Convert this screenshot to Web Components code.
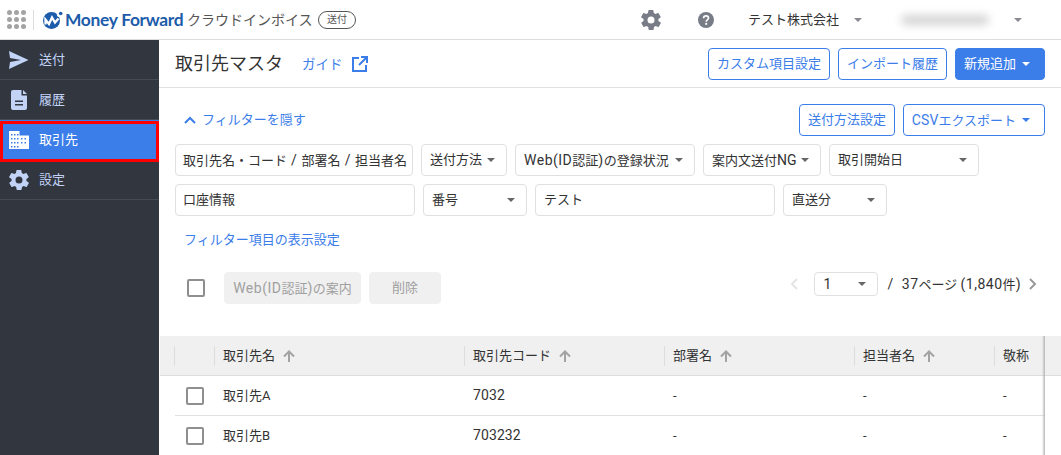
<!DOCTYPE html>
<html lang="ja"><head><meta charset="utf-8"><title>取引先マスタ</title>
<style>
html,body{margin:0;height:455px;overflow:hidden;background:#fff}
body{font:13px/20px Roboto,"Noto Sans CJK JP",sans-serif;color:#333;display:block}
</style></head><body>
<app-shell></app-shell>
<script>
const caret=(c='#666')=>`<svg width="8" height="4" viewBox="0 0 8 4" style="flex:none"><path d="M0 0h8L4 4z" fill="${c}"/></svg>`;
const L=(s,ls)=>`<mf-l${ls?` style="letter-spacing:${ls}px"`:''}>${s}</mf-l>`;
const GEAR='M19.4 13a7.5 7.5 0 0 0 0-2l2.1-1.6a.5.5 0 0 0 .1-.6l-2-3.5a.5.5 0 0 0-.6-.2l-2.5 1a7.3 7.3 0 0 0-1.7-1l-.4-2.7a.5.5 0 0 0-.5-.4h-4a.5.5 0 0 0-.5.4l-.4 2.7a7.3 7.3 0 0 0-1.7 1l-2.5-1a.5.5 0 0 0-.6.2l-2 3.5a.5.5 0 0 0 .1.6L4.6 11a7.5 7.5 0 0 0 0 2l-2.1 1.6a.5.5 0 0 0-.1.6l2 3.5c.1.2.4.3.6.2l2.5-1a7.3 7.3 0 0 0 1.7 1l.4 2.7c0 .2.2.4.5.4h4c.3 0 .5-.2.5-.4l.4-2.7a7.3 7.3 0 0 0 1.7-1l2.5 1c.2.1.5 0 .6-.2l2-3.5a.5.5 0 0 0-.1-.6zM12 15.5a3.5 3.5 0 1 1 0-7 3.5 3.5 0 0 1 0 7z';
function def(name,css,html){
  customElements.define(name,class extends HTMLElement{
    constructor(){super();const r=this.attachShadow({mode:'open'});
      r.innerHTML=`<style>${css}</style>${html}`;}
  });
}
def('mf-l',`:host{display:inline;font-size:14px;letter-spacing:.5px}`,`<slot></slot>`);
def('mf-btn',`
:host{display:inline-flex;align-items:center;justify-content:center;box-sizing:border-box;height:32px;border:1px solid #3b7de9;border-radius:4px;color:#3b7de9;background:#fff;gap:6px;white-space:nowrap;flex:none}
:host([primary]){background:#3b7de9;color:#fff}
:host([disabled]){background:#f0f0f0;border-color:#f0f0f0;color:#a0a0a0}
:host([menu]){padding-right:6px}
`,`<slot></slot>`);
def('mf-field',`
:host{display:flex;align-items:center;justify-content:space-between;box-sizing:border-box;height:32px;border:1px solid #e0e0e0;border-radius:4px;padding:0 11px 0 8px;color:#333;background:#fff;white-space:nowrap;overflow:hidden;flex:none}
`,`<slot></slot>`);
def('mf-check',`
:host{display:block;box-sizing:border-box;width:18px;height:18px;border:2px solid #8f8f8f;border-radius:2px;background:#fff}
`,``);
def('nav-item',`
:host{display:flex;align-items:center;height:40px;box-sizing:border-box;border-bottom:1px solid #454a54;color:#c2d3f6;padding-left:9px;gap:10px}
:host([active]){background:#3b7de9;color:#fff;border-bottom-color:#3b7de9}
.i{width:20px;height:20px;flex:none;display:flex;align-items:center;justify-content:center}
`,`<span class="i"><slot name="icon"></slot></span><slot></slot>`);
def('app-header',`
:host{display:flex;align-items:center;height:40px;box-sizing:border-box;border-bottom:1px solid #ddd;background:#fff;flex:none}
.grid{margin-left:7px;display:grid;grid-template-columns:repeat(3,5px);gap:2px}
.grid i{width:5px;height:5px;border-radius:50%;background:#a3a3a3}
.sep{width:1px;height:20px;background:#ddd;margin:0 8px 0 7px;flex:none}
.mark{flex:none}
.brand{font:700 17.4px/20px Lato,Roboto,sans-serif;color:#1c5caa;margin-left:2px;letter-spacing:-.3px;width:119px;white-space:nowrap}
.prod{font-size:14px;color:#555;margin-left:3px;white-space:nowrap;width:127px}
.tag{box-sizing:border-box;width:38px;height:18px;text-align:center;border:1px solid #555;border-radius:9px;font-size:10px;line-height:16px;margin-left:4px;color:#555;flex:none}
.gear{margin-left:283px;flex:none}.help{margin-left:35px;flex:none}
.co{margin-left:34px;width:106px;flex:none}
.blur{width:88px;height:10px;border-radius:5px;background:#d4d4d4;filter:blur(4px);margin:0 25px 0 39px;flex:none}
`,`<div class="grid">${'<i></i>'.repeat(9)}</div><div class="sep"></div>
<svg class="mark" width="21" height="18" viewBox="0 0 21 18"><circle cx="9.500" cy="9.500" r="8.500" fill="#1c5caa"/><circle cx="18" cy="3" r="3.200" fill="#fff"/><circle cx="18.700" cy="2.500" r="1.800" fill="#1c5caa"/><path d="M3.500 13.500V8.500l3.500 4.500 3-6.500 3 5 3.500-4" fill="none" stroke="#fff" stroke-width="2.300"/></svg>
<span class="brand">Money Forward</span><span class="prod">クラウドインボイス</span><span class="tag">送付</span>
<svg class="gear" width="24" height="24" viewBox="0 0 24 24"><path fill="#777c87" d="${GEAR}"/></svg>
<svg class="help" width="16" height="16" viewBox="0 0 16 16"><circle cx="8" cy="8" r="8" fill="#777c87"/><path d="M5.600 6.200c0-1.400 1-2.300 2.500-2.300s2.400.9 2.400 2.100c0 1.900-2.300 1.900-2.300 3.700" fill="none" stroke="#fff" stroke-width="1.700"/><circle cx="8.200" cy="11.900" r="1.100" fill="#fff"/></svg>
<span class="co">テスト株式会社</span>${caret('#8a8a92')}<div class="blur"></div>${caret('#8a8a92')}`);
def('side-nav',`
:host{display:block;width:159px;background:#31363f;flex:none;height:415px}
`,`<nav-item><svg slot="icon" width="20" height="18" viewBox="0 0 20 18"><path fill="#c2d3f6" d="M0 0l19.500 9L0 18l1-7 11-2-11-2z"/></svg>送付</nav-item>
<nav-item><svg slot="icon" width="16" height="20" viewBox="0 0 16 20"><path fill="#c2d3f6" fill-rule="evenodd" d="M2 0h8.500v5.500H16V18a2 2 0 0 1-2 2H2a2 2 0 0 1-2-2V2a2 2 0 0 1 2-2zm10 0 4 4h-4zM4 10.500V12h8v-1.500zM4 14v1.500h8V14z"/></svg>履歴</nav-item>
<nav-item active><svg slot="icon" width="20" height="18" viewBox="0 0 20 18"><path fill="#fff" fill-rule="evenodd" d="M0 0h10.500v4.500H20V18H0zM2 3v1.500h1.500V3zm3 0v1.500h1.500V3zm3 0v1.500h1.500V3zM2 7v1.500h1.500V7zm3 0v1.500h1.500V7zm3 0v1.500h1.500V7zm4 0v1.500h1.500V7zm3.500 0v1.500H17V7zM2 11v1.500h1.500V11zm3 0v1.500h1.500V11zm3 0v1.500h1.500V11zm4 0v1.500h1.500V11zm3.500 0v1.500H17V11zM2 15v1.500h1.500V15zm3 0v1.500h1.500V15zm3 0v1.500h1.500V15z"/></svg>取引先</nav-item>
<nav-item><svg slot="icon" width="24" height="24" viewBox="0 0 24 24" style="margin:-2px"><path fill="#c2d3f6" d="${GEAR}"/></svg>設定</nav-item>`);
def('title-bar',`
:host{display:flex;align-items:center;height:48px;box-sizing:border-box;border-bottom:1px solid #e0e0e0;padding:0 16px;flex:none}
h1{font-size:18px;font-weight:400;margin:0;color:#333}
.guide{color:#3b7de9;margin-left:19px;display:flex;align-items:center;gap:9px;font-size:13.500px}
.sp{flex:1}
mf-btn{margin-left:8px}
`,`<h1>取引先マスタ</h1><span class="guide">ガイド<svg width="16" height="16" viewBox="0 0 16 16" fill="none" stroke="#3b7de9" stroke-width="2"><path d="M7 2H1v13h13V9M9 1h6v6M15 1 7 9"/></svg></span><span class="sp"></span>
<mf-btn style="width:122px">カスタム項目設定</mf-btn><mf-btn style="width:109px">インポート履歴</mf-btn><mf-btn primary menu style="width:90px">新規追加 ${caret('#fff')}</mf-btn>`);
def('filter-panel',`
:host{display:block;padding:16px 16px 0;flex:none}
.top{display:flex;align-items:center;height:32px}
.hide{color:#3b7de9;display:flex;align-items:center;gap:6px;margin-left:9px}
.sp{flex:1}
.top mf-btn{margin-left:8px}
.row{display:flex;gap:8px;margin-top:8px}
.link{color:#3b7de9;margin:14px 0 0 9px;height:20px}
`,`<div class="top"><span class="hide"><svg width="12" height="8" viewBox="0 0 12 8" fill="none" stroke="#3b7de9" stroke-width="2"><path d="M1 7l5-5 5 5"/></svg>フィルターを隠す</span><span class="sp"></span>
<mf-btn style="width:96px">送付方法設定</mf-btn><mf-btn menu style="width:142px"><span>${L('CSV',.1)}エクスポート</span>${caret('#3b7de9')}</mf-btn></div>
<div class="row"><mf-field style="width:238px"><span style="margin-left:-1px">取引先名・コード${L('&nbsp;/&nbsp;',.6)}部署名${L('&nbsp;/&nbsp;',.6)}担当者名</span></mf-field><mf-field style="width:86px"><span>送付方法</span>${caret()}</mf-field><mf-field style="width:180px"><span>${L('Web(ID')}認証${L(')')}の登録状況</span>${caret()}</mf-field><mf-field style="width:118px"><span>案内文送付${L('NG',.1)}</span>${caret()}</mf-field><mf-field style="width:150px"><span>取引開始日</span>${caret()}</mf-field></div>
<div class="row"><mf-field style="width:240px"><span style="margin-left:-1px">口座情報</span></mf-field><mf-field style="width:104px"><span>番号</span>${caret()}</mf-field><mf-field style="width:240px">テスト</mf-field><mf-field style="width:104px"><span>直送分</span>${caret()}</mf-field></div>
<div class="link">フィルター項目の表示設定</div>`);
def('action-bar',`
:host{display:flex;align-items:center;height:32px;margin:22px 16px 0 28px;flex:none}
mf-btn{margin-left:8px}
mf-check{margin-right:11px}
.sp{flex:1}
.pg{display:flex;align-items:center;height:24px;align-self:flex-start}
mf-field{height:24px;width:64px;margin:0 10px 0 16px;padding-left:9px}
.s{margin-right:8px}
.r{margin:0 8px 0 8px}
`,`<mf-check></mf-check><mf-btn disabled style="width:137px"><span>${L('Web(ID')}認証${L(')')}の案内</span></mf-btn><mf-btn disabled style="width:72px">削除</mf-btn><span class="sp"></span>
<div class="pg"><svg width="8" height="12" viewBox="0 0 8 12" fill="none" stroke="#e5e5e5" stroke-width="2"><path d="M7 1 2 6l5 5"/></svg><mf-field>${L('1')}${caret()}</mf-field><span class="s">${L('/')}</span><span>${L('37')}ページ ${L('(1,840')}件${L(')')}</span><svg class="r" width="8" height="12" viewBox="0 0 8 12" fill="none" stroke="#999" stroke-width="2"><path d="M1 1l5 5-5 5"/></svg></div>`);
const cols='14px 40px 250px 200px 190px 140px 50px 1fr';
const arrow=`<svg style="margin-left:8px" width="12" height="12" viewBox="0 0 12 12" fill="none" stroke="#a3a3a3" stroke-width="2"><path d="M6 12V1.500M1 6.500l5-5 5 5"/></svg>`;
def('data-table',`
:host{display:block;margin:32px 0 0 1px;position:relative;flex:1;overflow:hidden}
.head{display:grid;grid-template-columns:${cols};height:40px;box-sizing:border-box;background:#f0f0f0;border-bottom:1px solid #ddd;align-items:center}
.head>div{height:20px;border-left:1px solid #ddd;padding-left:8px;display:flex;align-items:center;white-space:nowrap}
.head>.n{border:0}
.head>.e{border:0}
.row{display:grid;height:40px;box-sizing:border-box;margin-left:15px;width:870px;border-bottom:1px solid #e0e0e0;align-items:center;grid-template-columns:39px 250px 200px 190px 140px 51px}
.row>div{padding-left:9px}
.row>div:first-child{padding-left:11px}
.shadow{position:absolute;left:882px;top:0;bottom:0;width:3px;background:linear-gradient(to right,transparent,#b5b5b5)}
`,`<div class="head"><div class="n"></div><div></div><div>取引先名${arrow}</div><div>取引先コード${arrow}</div><div>部署名${arrow}</div><div>担当者名${arrow}</div><div>敬称</div><div class="e"></div></div>
<div class="row"><div><mf-check></mf-check></div><div>取引先A</div><div>${L('7032',.1)}</div><div>-</div><div>-</div><div>-</div></div>
<div class="row"><div><mf-check></mf-check></div><div>取引先B</div><div>${L('703232',.1)}</div><div>-</div><div>-</div><div>-</div></div>
<div class="shadow"></div>`);
def('app-shell',`
:host{display:flex;flex-direction:column;width:1061px;height:455px;overflow:hidden;position:relative}
.body{display:flex;flex:1;min-height:0}
main{flex:1;min-width:0;display:flex;flex-direction:column}
.mark{position:absolute;left:0;top:121px;width:158.500px;height:41px;box-sizing:border-box;border:3px solid #f00;pointer-events:none}
`,`<app-header></app-header><div class="body"><side-nav></side-nav><main><title-bar></title-bar><filter-panel></filter-panel><action-bar></action-bar><data-table></data-table></main></div><div class="mark"></div>`);
</script></body></html>
